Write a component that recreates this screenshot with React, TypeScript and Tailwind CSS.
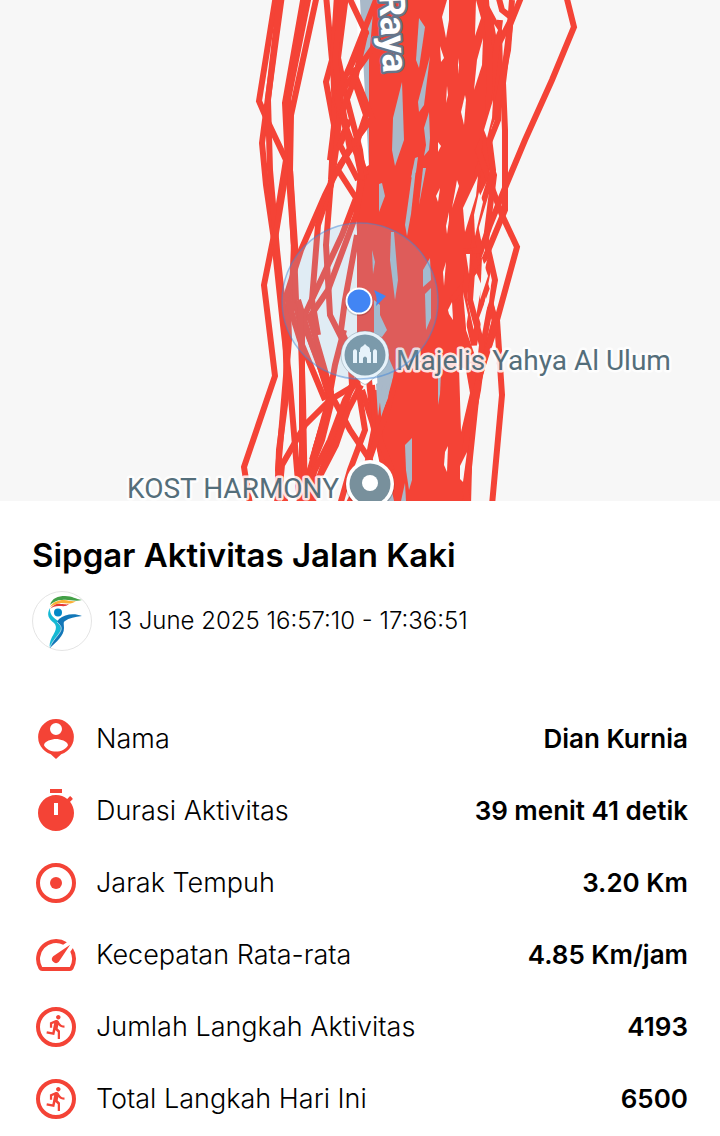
import type { ReactNode } from 'react';

type Stat = {
  label: string;
  value: string;
  icon: ReactNode;
};

// Walked tracks, drawn as loose strands on both sides of the main bundle
const tracks = [
  '276,-5 259,101 268,122 286,160 274,235 264,285 275,376 244,467 250,505',
  '282,-5 267,105 262,143 266,185 274,240 283,325 290,385 297,470 300,505',
  '280,-5 268,100 270,170 277,250 285,325 287,390 279,450 277,505',
  '304,-5 285,103 288,165 294,245 292,290 302,330 302,505',
  '309,-5 288,100 288,160 274,245',
  '317,-5 291,115 290,170 296,260 288,305 289,340 284,400 278,470 286,505',
  '326,-5 332,60 326,82 334,125 331,180 326,245 330,315 345,345',
  '337,-5 333,60 335,120 330,160 350,120',
  '346,-5 338,58 347,100 360,150 364,180',
  '342,-5 335,60 341,100 336,150 331,185 318,225 312,300 318,335',
  '348,-5 366,33 350,68 366,115 356,145 366,175',
  '378,-5 350,66 335,100 343,120 357,155 362,180',
  '375,45 337,98 346,130 340,145 358,180',
  '352,68 372,118 352,145 338,170 356,198 342,235 328,265 300,325',
  '366,30 356,75 343,110 350,150 340,165 325,195 301,250 285,300',
  '362,180 356,215 328,290 309,318 288,301 300,340 325,400',
  '357,235 345,300 341,330 350,350 352,385 340,420 320,475 312,505',
  '302,320 318,360 330,400 305,425 282,465 278,505',
  '309,315 331,392 318,440 310,470 306,505',
  '298,300 312,345 332,400 322,440 308,475 308,505',
  '300,310 303,400 305,505',
  '290,170 294,250 296,300',
  '344,330 335,365 326,415 312,460',
  '365,372 350,388 330,400 315,450 312,505',
  '326,385 350,430 370,460 374,505',
  '358,378 345,400 330,440 310,480',
  '361,385 348,410 336,445 318,480',
  '357,380 365,430 350,470 340,505',
  '362,390 378,440 384,470',
  '369,380 374,430 366,470 348,505',
  '372,385 376,430 385,470',
  '376,390 380,440 392,470',
  '396,378 386,415 376,440 364,475',
  '566,-5 574,27 552,80 525,140 507,183 490,225 474,270 450,310',
  '522,-5 510,25 503,83 505,130 505,210 485,258 452,300',
  '498,-5 502,10 512,18 498,45 498,120 478,170 474,240 478,265',
  '512,0 508,50 496,110 478,150 502,215 517,247 497,320 502,395 492,505',
  '500,20 490,100 485,150 494,175 486,240 495,280 485,335 478,390 470,430 468,505',
  '486,0 490,60 488,130 493,170 475,230 470,300 482,345 476,400 465,505',
  '495,320 488,345 471,410 462,470 468,505',
  '470,250 487,290 495,320 488,350',
  '480,265 496,325 478,380',
  '464,252 480,250 470,200',
  '470,250 464,300 474,345 482,300 490,260',
];

// Breaks in the bundle where the road shows through
const roadGaps = [
  '416,60 419,18 425,27 419,68',
  '418,102 430,56 424,105 419,112',
  '393,118 402,82 404,140 395,166 392,150',
  '424,128 429,112 430,138 429,150 424,156 426,145',
  '411,178 415,158 418,157 416,172',
  '385,22 389,26 387,34',
  '379,184 382,183 385,196 379,212',
  '413,168 416,168 411,214 407,236 405,225',
  '423,168 426,168 419,205',
  '391,232 394,232 398,280 395,300 390,260',
  '423,270 430,258 431,280 423,287',
  '425,294 431,288 431,318 426,330',
  '374,300 380,305 380,315 387,330 382,337 374,335',
  '372,250 375,262 373,274',
  '376,384 383,380 380,402 378,416',
  '387,385 390,382 388,398 383,410',
  '405,445 412,438 412,480 409,490 406,470',
  '438,378 441,372 440,394 438,405',
  '401,501 405,483 406,501',
];

const paperGaps = [
  '442,17 447,0 449,0 449,20 446,38',
  '440,46 444,58 441,62',
  '476,0 481,18 475,36',
  '494,24 498,30 496,35',
  '477,60 483,38 482,65 474,90',
  '458,58 459,65 458,74',
  '461,112 465,95 466,100 464,125',
  '484,130 493,100 492,118 487,138',
  '447,86 448,95 446,103',
  '438,142 441,146 438,152',
  '436,196 440,188 438,202',
  '457,180 459,186 452,208',
  '446,226 449,212 449,220 447,234',
  '463,208 478,176 476,196 465,232',
  '479,192 483,202 475,236 474,215',
  '466,254 470,254 469,274',
  '443,272 446,262 444,286',
  '448,310 452,302 453,320 449,314',
  '482,258 488,276 480,300',
  '479,318 491,285 489,302 481,325',
  '463,292 468,315 466,328',
  '459,366 466,370 470,393 461,432',
  '445,452 448,446 447,472 444,465',
  '460,466 467,452 463,482 460,479',
];

const RingIcon = ({ children }: { children: ReactNode }) => (
  <svg viewBox="0 0 24 24" className="size-12" fill="currentColor" aria-hidden>
    <circle cx="12" cy="12" r="9" fill="none" stroke="currentColor" strokeWidth="2" />
    {children}
  </svg>
);

const RunIcon = () => (
  <RingIcon>
    <path
      transform="translate(5.6 5.15) scale(.56)"
      d="M13.49 5.48c1.1 0 2-.9 2-2s-.9-2-2-2-2 .9-2 2 .9 2 2 2zm-3.6 13.9l1-4.4 2.1 2v6h2v-7.5l-2.1-2 .6-3c1.3 1.5 3.3 2.5 5.5 2.5v-2c-1.9 0-3.5-1-4.3-2.4l-1-1.6c-.4-.6-1-1-1.7-1-.3 0-.5.1-.8.1l-5.2 2.2v4.7h2v-3.4l1.8-.7-1.6 8.1-4.9-1-.4 2 7 1.4z"
    />
  </RingIcon>
);

const PersonIcon = () => (
  <svg viewBox="0 0 24 24" className="size-12" fill="currentColor" aria-hidden>
    <path
      fillRule="evenodd"
      d="M12 2a9 9 0 0 0-2.6 17.6L12 22l2.6-2.4A9 9 0 0 0 12 2zm0 2a3 3 0 1 1 0 6 3 3 0 0 1 0-6zm0 14.3c-2.5 0-4.9-1.2-6-3.2.1-2 4-3.1 6-3.1s5.9 1.1 6 3.1c-1.1 2-3.5 3.2-6 3.2z"
    />
  </svg>
);

const TimerIcon = () => (
  <svg viewBox="0 0 24 24" className="size-12" fill="currentColor" aria-hidden>
    <path
      fillRule="evenodd"
      d="M15 1H9v2h6V1zm-4 13h2V8h-2v6zm8.03-6.61l1.42-1.42c-.43-.51-.9-.99-1.41-1.41l-1.42 1.42C16.07 4.74 14.12 4 12 4c-4.97 0-9 4.03-9 9s4.02 9 9 9 9-4.03 9-9c0-2.12-.74-4.07-1.97-5.61z"
    />
  </svg>
);

const SpeedIcon = () => (
  <svg viewBox="0 0 24 24" className="size-12" fill="currentColor" aria-hidden>
    <path d="M20.38 8.57l-1.23 1.85a8 8 0 0 1-.22 7.58H5.07A8 8 0 0 1 15.58 6.85l1.85-1.23A10 10 0 0 0 3.35 19a2 2 0 0 0 1.72 1h13.85a2 2 0 0 0 1.74-1 10 10 0 0 0-.27-10.44zm-9.79 6.84a2 2 0 0 0 2.83 0l5.66-8.49-8.49 5.66a2 2 0 0 0 0 2.83z" />
  </svg>
);

const stats: Stat[] = [
  { label: 'Nama', value: 'Dian Kurnia', icon: <PersonIcon /> },
  { label: 'Durasi Aktivitas', value: '39 menit 41 detik', icon: <TimerIcon /> },
  {
    label: 'Jarak Tempuh',
    value: '3.20 Km',
    icon: (
      <RingIcon>
        <circle cx="12" cy="12" r="3" />
      </RingIcon>
    ),
  },
  { label: 'Kecepatan Rata-rata', value: '4.85 Km/jam', icon: <SpeedIcon /> },
  { label: 'Jumlah Langkah Aktivitas', value: '4193', icon: <RunIcon /> },
  { label: 'Total Langkah Hari Ini', value: '6500', icon: <RunIcon /> },
];

const ActivityMap = () => (
  <svg viewBox="0 0 720 501" className="block w-full bg-[#f7f7f7] font-['Roboto',sans-serif]">
    <polygon points="356,0 428,0 435,250 442,501 378,501 364,180" fill="#ffffff" />
    <polygon points="360,0 426,0 433,250 440,501 382,501 369,170" fill="#a9b9c9" />

    <polygon
      points="374,0 486,0 502,30 503,70 496,110 487,145 490,175 478,200 474,250 466,290 466,330 480,370 475,395 473,450 463,501 394,501 385,458 374,440 380,420 392,385 394,370 383,345 357,340 357,232 355,200 358,172 369,165 369,60"
      fill="#f44336"
    />
    {tracks.map((points) => (
      <polyline key={points} points={points} fill="none" stroke="#f44336" strokeWidth="6" />
    ))}
    {roadGaps.map((points) => (
      <polygon key={points} points={points} fill="#a9b9c9" />
    ))}
    {paperGaps.map((points) => (
      <polygon key={points} points={points} fill="#f7f7f7" />
    ))}

    <text
      transform="translate(379 -6) rotate(87)"
      fontSize="36"
      fontWeight="700"
      fill="#ffffff"
      stroke="#66758a"
      strokeWidth="5"
      strokeLinejoin="round"
      style={{ paintOrder: 'stroke' }}
    >
      Raya
    </text>

    {/* Mosque pin */}
    <path
      d="M365 331a24 24 0 0 0-24 24c0 11 7 17 14 22l7 6q3 3 6 0l7-6c7-5 14-11 14-22a24 24 0 0 0-24-24z"
      fill="#ffffff"
      stroke="#5b6670"
      strokeOpacity=".35"
    />
    <circle cx="365" cy="355" r="20.5" fill="#78909c" />
    <path
      d="M353 363v-12q0-1 2-2 2 1 2 2v12zm20 0v-12q0-1 2-2 2 1 2 2v12zm-14 0v-11h1v-2q0-3 3-4l2-2 2 2q3 1 3 4v2h1v11h-4v-5q-2-3-4 0v5z"
      fill="#ffffff"
    />

    <g
      fill="#546e7a"
      stroke="#ffffff"
      strokeOpacity=".85"
      strokeWidth="5"
      strokeLinejoin="round"
      fontSize="28"
      style={{ paintOrder: 'stroke' }}
    >
      <text x="396" y="370">
        Majelis Yahya Al Ulum
      </text>
      <text x="127" y="498">
        KOST HARMONY
      </text>
    </g>
    <circle cx="370" cy="485" r="24.5" fill="#000000" opacity=".2" />
    <circle cx="370" cy="484" r="24" fill="#ffffff" />
    <circle cx="370" cy="484" r="20.5" fill="#78909c" />
    <circle cx="370" cy="483" r="8" fill="#ffffff" />

    {/* Current position and its accuracy radius */}
    <circle
      cx="360"
      cy="301"
      r="78"
      fill="#86c4ed"
      fillOpacity=".2"
      stroke="#4285d8"
      strokeOpacity=".5"
      strokeWidth="1.5"
    />
    <path d="M374 290l12 6-10 10q2-8-2-16z" fill="#4285f4" />
    <circle cx="359" cy="302" r="14" fill="#000000" opacity=".15" />
    <circle cx="359" cy="301" r="13.5" fill="#ffffff" />
    <circle cx="359" cy="301" r="11.5" fill="#4285f4" />
  </svg>
);

const Logo = () => (
  <svg viewBox="0 0 60 60" className="size-15 shrink-0" aria-hidden>
    <circle cx="30" cy="30" r="29.5" fill="#ffffff" stroke="#dddddd" strokeWidth=".8" />
    <path d="M18 14C20 7 26 5 33 5c8 0 10 3 17 4-7 2-13-1-20 0-5 0-9 2-12 5z" fill="#43a047" />
    <path d="M18 16c3-5 8-7 14-7 5 0 7 2 12 1-5 4-10 2-15 2-5 1-8 2-11 4z" fill="#fbb034" />
    <path d="M18 18c3-4 7-6 11-5 4 0 5 1 8 0-3 3-6 2-10 2-4 0-7 1-9 3z" fill="#e53935" />
    <circle cx="26" cy="21.5" r="4" fill="#0288c7" />
    <path
      d="M18 17c-4 7-1 11 4 15 4 4 1 9-2 14-2 4-3 8-2 11 3-7 12-14 12-22-1-5-9-7-11-12-1-2-1-4-1-6z"
      fill="#16b9d4"
    />
    <path
      d="M50 25c-8-3-17-2-23 3l-2 3c5 5 5 8 1 13-3 4-7 8-8 13 6-6 14-12 14-20 0-4-1-6 1-7 4-3 10-4 17-5z"
      fill="#1277b8"
    />
    <path d="M25 31c6 5 5 8 1 13-3 4-6 7-8 12" fill="none" stroke="#ffffff" strokeWidth=".6" />
  </svg>
);

const App = () => {
  return (
    <main className="min-h-screen bg-white font-['Inter',sans-serif] text-black">
      <ActivityMap />
      <section className="px-8 pt-8">
        <h1 className="text-[33px] leading-11 font-semibold">Sipgar Aktivitas Jalan Kaki</h1>
        <div className="mt-3.5 flex items-center gap-4">
          <Logo />
          <p className="text-2xl font-light">13 June 2025 16:57:10 - 17:36:51</p>
        </div>
        <dl className="mt-13">
          {stats.map((stat) => (
            <div key={stat.label} className="flex h-18 items-center justify-between">
              <dt className="flex items-center gap-4 text-[27px] leading-8 font-light">
                <span className="text-[#f44336]">{stat.icon}</span>
                {stat.label}
              </dt>
              <dd className="text-[26px] leading-8 font-semibold">{stat.value}</dd>
            </div>
          ))}
        </dl>
      </section>
    </main>
  );
};

export default App;
